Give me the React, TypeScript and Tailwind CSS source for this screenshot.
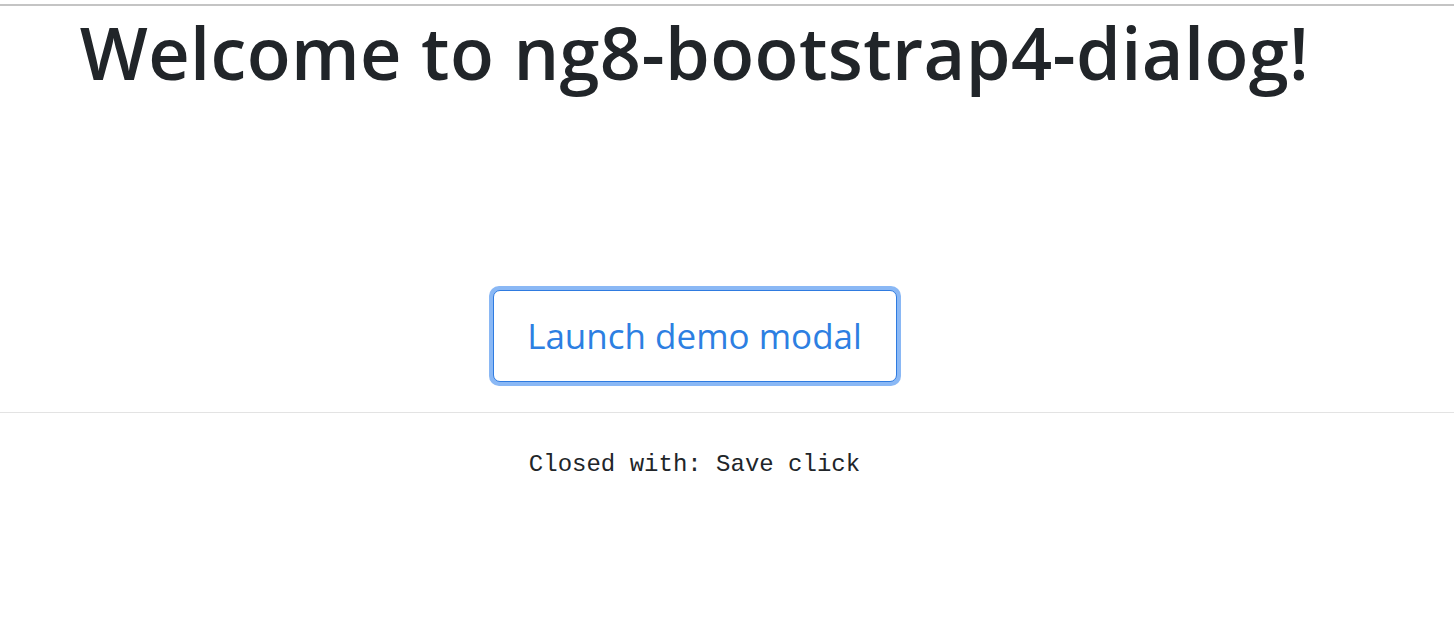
import React from "react";

export default function App() {
  return (
    <div className="w-[1454px] h-[635px] bg-white overflow-hidden" style={{ fontFamily: '"Open Sans", "Noto Sans", sans-serif' }}>
      <div className="mt-[4px] h-[2px] bg-[#c4c4c4]" />
      <div className="w-[1389px] flex flex-col items-center">
        <h1 className="mt-[2px] text-[72px] leading-[88px] font-semibold text-[#212529] tracking-[0.4px]">
          Welcome to ng8-bootstrap4-dialog!
        </h1>
        <div className="mt-[190px] rounded-[10px] p-[4px] bg-[#8ab8f5]">
          <button className="w-[404px] h-[92px] rounded-[7px] border border-[#2f7be0] bg-white text-[#2d7fe2] text-[35px] font-normal">
            Launch demo modal
          </button>
        </div>
      </div>
      <div className="mt-[26px] h-[1px] bg-[#e3e3e3]" />
      <div className="w-[1389px] flex justify-center">
        <pre className="mt-[36px] text-[24px] leading-[32px] text-[#212529]" style={{ fontFamily: '"Liberation Mono", monospace' }}>
          Closed with: Save click
        </pre>
      </div>
    </div>
  );
}
